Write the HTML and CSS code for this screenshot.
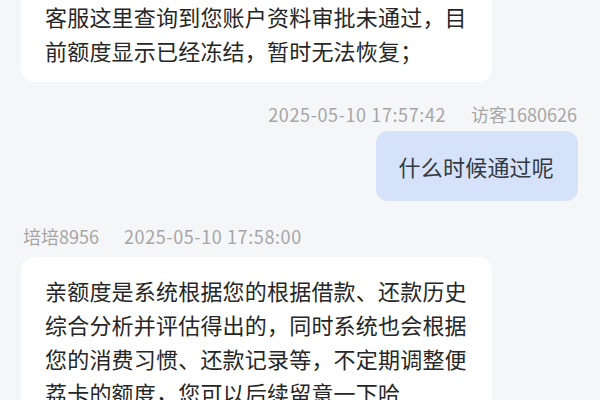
FILE: index.html
```html
<!DOCTYPE html>
<html lang="zh-CN">
<head>
<meta charset="utf-8">
<title>客服对话</title>
<link rel="stylesheet" href="styles.css">
</head>
<body>
<div class="chat">
  <div class="bubble bubble-in bubble-first">客服这里查询到您账户资料审批未通过，目前额度显示已经冻结，暂时无法恢复；</div>

  <div class="meta meta-out">
    <span class="time">2025-05-10 17:57:42</span>
    <span>访客1680626</span>
  </div>
  <div class="bubble bubble-out">什么时候通过呢</div>

  <div class="meta meta-in">
    <span>培培8956</span>
    <span class="time">2025-05-10 17:58:00</span>
  </div>
  <div class="bubble bubble-in bubble-last">亲额度是系统根据您的根据借款、还款历史综合分析并评估得出的，同时系统也会根据您的消费习惯、还款记录等，不定期调整便荔卡的额度，您可以后续留意一下哈</div>
</div>
</body>
</html>
```

FILE: styles.css
```css
html, body {
  margin: 0;
  padding: 0;
  background: #f5f6f8;
}

body {
  width: 600px;
  height: 400px;
  overflow: hidden;
  font-family: "Noto Sans CJK SC", "Noto Sans", sans-serif;
}

.chat {
  display: flex;
  flex-direction: column;
  padding: 0 22px 0 21px;
}

.bubble {
  box-sizing: border-box;
  font-size: 22px;
  line-height: 34px;
  color: #262626;
  letter-spacing: 0.2px;
}

.bubble-in {
  align-self: flex-start;
  width: 471px;
  background: #ffffff;
  border-radius: 14px;
  padding: 16px 22px 15px 24px;
}

.bubble-first {
  margin-top: -17px;
}

.bubble-last {
  margin-top: 9px;
  padding-top: 16px;
}

.bubble-out {
  align-self: flex-end;
  margin-top: 5px;
  background: #d6e2f9;
  border-radius: 12px;
  padding: 18px 24px 18px 23px;
  color: #333a44;
}

.meta {
  display: flex;
  gap: 25px;
  font-size: 18px;
  line-height: 24px;
  color: #a6a6a6;
}

.time {
  letter-spacing: 0.6px;
}

.meta-out {
  align-self: flex-end;
  margin-top: 20px;
  margin-right: 1px;
}

.meta-in {
  align-self: flex-start;
  margin-top: 23px;
  margin-left: 2px;
}
```
